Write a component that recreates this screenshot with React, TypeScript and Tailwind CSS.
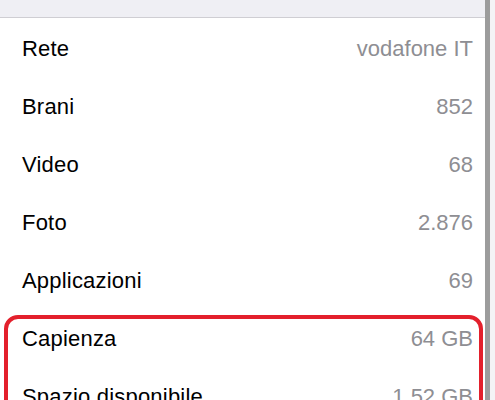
const rows = [
  { label: 'Rete', value: 'vodafone IT' },
  { label: 'Brani', value: '852' },
  { label: 'Video', value: '68' },
  { label: 'Foto', value: '2.876' },
  { label: 'Applicazioni', value: '69' },
  { label: 'Capienza', value: '64 GB' },
  { label: 'Spazio disponibile', value: '1,52 GB' },
];

export default function App() {
  return (
    <div className="flex h-[400px] w-[495px] overflow-hidden bg-white font-['Liberation_Sans',Arial,sans-serif]">
      <div className="relative w-[485px] shrink-0">
        <div className="h-[18px] border-b border-[#cfced3] bg-[#efeff4]" />
        <ul className="pt-[2px]">
          {rows.map((row) => (
            <li
              key={row.label}
              className="flex h-[58px] items-center justify-between pr-[12px] pl-[22px] text-[22px] leading-none"
            >
              <span className="tracking-[0.2px] text-black">{row.label}</span>
              <span className="text-[#8e8e93]">{row.value}</span>
            </li>
          ))}
        </ul>
        {/* red annotation frame around the storage rows */}
        <div className="pointer-events-none absolute top-[315px] left-[4px] h-[120px] w-[479px] rounded-[14px] border-[4px] border-[#e3202c]" />
      </div>
      <div className="w-[5px] shrink-0 bg-[#9c9c9c]" />
      <div className="flex-1 bg-[#f4f4f6]" />
    </div>
  );
}
